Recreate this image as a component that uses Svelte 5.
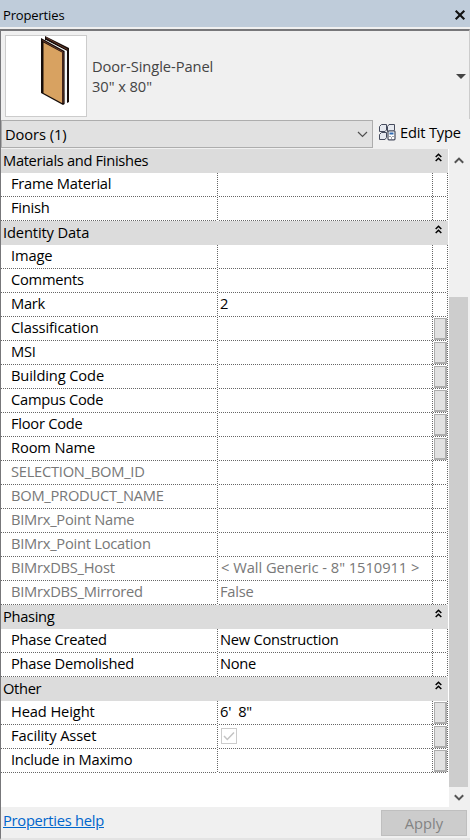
<script>
  const groups = [
    { title: 'Materials and Finishes', rows: [{ name: 'Frame Material' }, { name: 'Finish' }] },
    {
      title: 'Identity Data',
      loose: true,
      rows: [
        { name: 'Image', loose: true },
        { name: 'Comments' },
        { name: 'Mark', value: '2' },
        { name: 'Classification', button: true, loose: true },
        { name: 'MSI', button: true },
        { name: 'Building Code', button: true, loose: true },
        { name: 'Campus Code', button: true },
        { name: 'Floor Code', button: true },
        { name: 'Room Name', button: true, loose: true },
        { name: 'SELECTION_BOM_ID', off: true },
        { name: 'BOM_PRODUCT_NAME', off: true },
        { name: 'BIMrx_Point Name', off: true },
        { name: 'BIMrx_Point Location', off: true },
        { name: 'BIMrxDBS_Host', value: '< Wall Generic - 8" 1510911 >', off: true, wide: true },
        { name: 'BIMrxDBS_Mirrored', value: 'False', off: true }
      ]
    },
    {
      title: 'Phasing',
      rows: [
        { name: 'Phase Created', value: 'New Construction' },
        { name: 'Phase Demolished', value: 'None' }
      ]
    },
    {
      title: 'Other',
      rows: [
        { name: 'Head Height', value: "6'  8\"", button: true, loose: true },
        { name: 'Facility Asset', check: true, button: true, loose: true },
        { name: 'Include in Maximo', button: true }
      ]
    }
  ];
</script>

<div class="palette">
  <header>
    <span>Properties</span>
    <svg width="12" height="12" viewBox="0 0 12 12"><path d="M1.7 1.7 10.3 10.3M10.3 1.7 1.7 10.3" stroke="#111" stroke-width="2.1" /></svg>
  </header>

  <section class="type">
    <div class="thumb">
      <svg width="80" height="80" viewBox="0 0 80 80">
        <path d="M39 0 63 12V66L61 67V15L39 4Z" fill="#160d0a" />
        <path d="M40 1.500 61.500 13.500" fill="none" stroke="#6b3a2a" stroke-width="1" />
        <path d="M40 4 61 15V66L58 67V17L40 7Z" fill="#f6f6f6" />
        <path d="M35 2 58.600 15V68L57 69 35 57Z" fill="#160d0a" />
        <path d="M36.500 4.500 57 16V67" fill="none" stroke="#6b3a2a" stroke-width="1" />
        <path d="M37.500 6.500 56 16.500V67L37.500 57Z" fill="#d8a261" />
      </svg>
    </div>
    <div class="names">Door-Single-Panel<br />30" x 80"</div>
    <svg class="drop" width="10" height="5" viewBox="0 0 10 5"><path d="M0 0H10L5 5Z" fill="#444" /></svg>
  </section>

  <div class="filter">
    <div class="select">
      <span>Doors (1)</span>
      <svg width="11" height="7" viewBox="0 0 11 7"><path d="M1 1 5.500 5.500 10 1" fill="none" stroke="#505050" stroke-width="1.200" /></svg>
    </div>
    <div class="edit">
      <svg width="17" height="17" viewBox="0 0 17 17">
        <g fill="#e6e9ef" stroke="#454b5d" stroke-width="1">
          <path d="M.5 2.500 2.500 .500H7.500V6L6 7.500H.500ZM8.500 2.500 10 .500H15.500V6L14 7.500H8.500ZM.500 10.500 2.500 8.500H7.500V13.500L6 15.500H.500Z" />
          <rect x="9" y="6.800" width="7" height="9" rx="1" fill="#fff" stroke-width="1.200" />
        </g>
        <path d="M10.500 8.500H14.500V10.500H10.500Z" fill="#2d69b1" />
        <path d="M10.500 12.500H11.500M13.500 12.500H14.500M12 14H13" stroke="#454b5d" />
      </svg>
      <span>Edit Type</span>
    </div>
  </div>

  <div class="body">
    <div class="grid">
      {#each groups as g}
        <div class="group" class:loose={g.loose}>
          <span>{g.title}</span>
          <svg width="7" height="9" viewBox="0 0 7 9"><path d="M.7 4 3.500 1.200 6.300 4M.7 8 3.500 5.200 6.300 8" fill="none" stroke="#000" stroke-width="1.500" /></svg>
        </div>
        {#each g.rows as r}
          <div class="row" class:off={r.off}>
            <div class="name" class:loose={r.loose}>{r.name}</div>
            <div class="value" class:wide={r.wide}>
              {#if r.check}
                <svg class="check" width="16" height="16" viewBox="0 0 16 16"><rect x=".5" y=".5" width="15" height="15" fill="#fff" stroke="#ccc" /><path d="M3 8 6.300 11.500 13 4.500" fill="none" stroke="#c4c4c4" stroke-width="1.500" /></svg>
              {:else}<span>{r.value ?? ''}</span>{/if}
            </div>
            <div class="more">{#if r.button}<i></i>{/if}</div>
          </div>
        {/each}
      {/each}
    </div>
    <div class="scroll">
      <svg width="10" height="7" viewBox="0 0 10 7"><path d="M.8 5.800 5 1.600 9.200 5.800" fill="none" stroke="#555" stroke-width="2" /></svg>
      <div class="track"><div class="handle"></div></div>
      <svg width="10" height="7" viewBox="0 0 10 7"><path d="M.8 1.200 5 5.400 9.200 1.200" fill="none" stroke="#555" stroke-width="2" /></svg>
    </div>
  </div>

  <footer>
    <span class="help">Properties help</span>
    <div class="apply">Apply</div>
  </footer>
</div>

<style>
  .palette {
    width: 470px;
    height: 840px;
    box-sizing: border-box;
    display: flex;
    flex-direction: column;
    background: #f0f0f0;
    font: 14.7px/20px "Open Sans", "Noto Sans", sans-serif;
    letter-spacing: -0.26px;
    color: #000;
    overflow: hidden;
  }
  span, .name, .names { white-space: pre; }
  svg { display: block; flex: none; }
  header {
    height: 27px;
    flex: none;
    background: #bfccda;
    display: flex;
    align-items: center;
    justify-content: space-between;
    padding: 2px 4px 0 3px;
    box-sizing: border-box;
    font-size: 13px;
    letter-spacing: -0.15px;
  }
  .type {
    height: 90px;
    flex: none;
    margin-top: 2px;
    box-sizing: border-box;
    border-top: 2px solid #77777a;
    border-left: 1px solid #77777a;
    border-right: 1px solid #ccc;
    display: flex;
    align-items: flex-start;
    padding: 4px 3px 0 4px;
  }
  .thumb {
    width: 80px;
    height: 80px;
    border: 1px solid #ccc;
    background: #fff;
    flex: none;
  }
  .names { margin: 21px 0 0 5px; color: #444; flex: 1; letter-spacing: -0.07px; }
  .drop { margin-top: 39px; }
  .filter { height: 30px; flex: none; display: flex; padding: 1px 0; box-sizing: border-box; border-left: 1px solid #77777a; }
  .select {
    width: 372px;
    height: 28px;
    box-sizing: border-box;
    border: 1px solid #adadad;
    background: #e1e1e1;
    display: flex;
    align-items: center;
    justify-content: space-between;
    padding: 0 4px 0 3px;
    flex: none;
    letter-spacing: -0.08px;
  }
  .edit { display: flex; align-items: flex-start; gap: 4px; padding: 2px 0 0 6px; letter-spacing: -0.2px; }
  .edit svg { margin-top: 2px; }
  .body { height: 658px; flex: none; display: flex; border-left: 1px solid #77777a; }
  .grid { width: 448px; flex: none; background: #fff; box-sizing: border-box; border-right: 1px solid #fff; }
  .group {
    height: 24px;
    background: #dcdcdc;
    display: flex;
    justify-content: space-between;
    padding: 1px 6px 0 2px;
    box-sizing: border-box;
    letter-spacing: -0.33px;
  }
  .group svg { margin-top: 3px; }
  .row {
    height: 24px;
    display: flex;
    box-sizing: border-box;
    background: repeating-linear-gradient(90deg, #666 0 1px, #fff 1px 2px) 0 23px / 100% 1px no-repeat;
  }
  .row > div {
    box-sizing: border-box;
    background: repeating-linear-gradient(180deg, #666 0 1px, #fff 1px 2px) 100% 0 / 1px 100% no-repeat;
  }
  .off { color: #787878; }
  .name { width: 217px; padding-left: 10px; }
  .loose { letter-spacing: -0.13px; }
  .value { width: 215px; padding-left: 2px; }
  .wide { letter-spacing: -0.04px; padding-left: 3px; }
  .check { margin: 3px 0 0 1px; }
  .more { width: 15px; padding: 1px 1px 1px 1px; }
  .more i {
    display: block;
    width: 13px;
    height: 22px;
    box-sizing: border-box;
    border: 1px solid #adadad;
    border-right-width: 2px;
    border-bottom-width: 2px;
    background: #e1e1e1;
  }
  .scroll {
    width: 19px;
    display: flex;
    flex-direction: column;
    align-items: center;
    padding: 8px 0 6px;
    box-sizing: border-box;
  }
  .track { flex: 1; width: 19px; display: flex; align-items: flex-end; }
  .handle { width: 19px; height: 490px; margin-bottom: 7px; background: #cdcdcd; }
  footer {
    height: 33px;
    flex: none;
    display: flex;
    justify-content: space-between;
    padding: 3px 3px 0 2px;
    box-sizing: border-box;
    border-left: 1px solid #77777a;
    border-bottom: 2px solid #e3e3e3;
  }
  .help { color: #0066cc; text-decoration: underline; letter-spacing: -0.26px; }
  .apply {
    width: 86px;
    height: 26px;
    box-sizing: border-box;
    border: 1px solid #bfbfbf;
    background: #ccc;
    color: #838383;
    text-align: center;
    line-height: 25px;
    letter-spacing: 0;
  }
</style>
